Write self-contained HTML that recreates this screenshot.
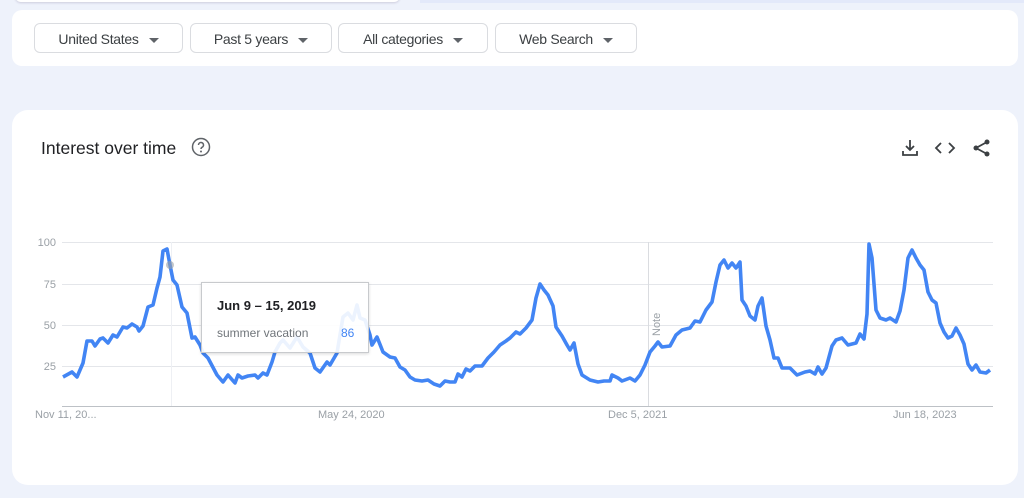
<!DOCTYPE html><html><head><style>
body{margin:0;width:1024px;height:498px;background:#eef2fb;font-family:"Liberation Sans",sans-serif;position:relative;overflow:hidden}
.bar{position:absolute;left:15px;top:-10px;width:385px;height:12px;background:#fff;border-radius:8px;box-shadow:0 1px 2px #ccd}
.blu{position:absolute;left:420px;top:0;width:604px;height:3px;background:#e3e9fa}
.top{position:absolute;left:12px;top:10px;width:1006px;height:56px;background:#fff;border-radius:10px}
.btn{position:absolute;top:13px;height:30px;border:1px solid #dadce0;border-radius:6px;font-size:14px;color:#3c4043;line-height:30px;text-align:center;box-sizing:border-box;letter-spacing:-0.3px}
.btn span{display:inline-block;width:0;height:0;border-left:5px solid transparent;border-right:5px solid transparent;border-top:5px solid #5f6368;margin-left:10px;vertical-align:middle}
.card{position:absolute;left:12px;top:110px;width:1006px;height:375px;background:#fff;border-radius:16px}
</style></head><body>
<div class="bar"></div><div class="blu"></div>
<div class="top">
<div class="btn" style="left:22px;width:149px">United States<span></span></div>
<div class="btn" style="left:178px;width:142px">Past 5 years<span></span></div>
<div class="btn" style="left:326px;width:150px">All categories<span></span></div>
<div class="btn" style="left:483px;width:142px">Web Search<span></span></div>
</div>
<div class="card"></div>
<div style="position:absolute;left:41px;top:138px;font-size:17.5px;color:#202124">Interest over time</div>
<svg style="position:absolute;left:191px;top:137px" width="20" height="20" viewBox="0 0 20 20"><circle cx="10" cy="10" r="8.5" fill="none" stroke="#5f6368" stroke-width="1.5"/><path d="M7.5 8a2.5 2.5 0 1 1 3.5 2.3c-.7.4-1 .8-1 1.7" fill="none" stroke="#5f6368" stroke-width="1.5"/><circle cx="10" cy="14.5" r="1" fill="#5f6368"/></svg>
<svg style="position:absolute;left:900px;top:138px" width="95" height="20" viewBox="0 0 95 20"><g fill="none" stroke="#3c4043" stroke-width="1.8"><path d="M10 2v10M6 8l4 4 4-4M3 13v4h14v-4"/><path d="M41 5l-5 5 5 5M49 5l5 5-5 5"/><path d="M87 4l-11 6 11 6"/></g><g fill="#3c4043"><circle cx="87" cy="4" r="2.5"/><circle cx="76" cy="10" r="2.5"/><circle cx="87" cy="16" r="2.5"/></g></svg>
<svg style="position:absolute;left:0;top:0" width="1024" height="498">
<g stroke="#e4e6ea" stroke-width="1"><line x1="62" y1="242.5" x2="993" y2="242.5"/><line x1="62" y1="284.5" x2="993" y2="284.5"/><line x1="62" y1="325.5" x2="993" y2="325.5"/><line x1="62" y1="366.5" x2="993" y2="366.5"/><line x1="171.5" y1="242" x2="171.5" y2="406" stroke="#eef0f4"/><line x1="648.5" y1="242" x2="648.5" y2="406" stroke="#dadce0"/></g>
<line x1="62" y1="406.5" x2="993" y2="406.5" stroke="#bdc1c6"/>
<g font-family="Liberation Sans" font-size="11" fill="#9aa0a6"><text x="56" y="246" text-anchor="end">100</text><text x="56" y="288" text-anchor="end">75</text><text x="56" y="329" text-anchor="end">50</text><text x="56" y="370" text-anchor="end">25</text>
<text x="35" y="418">Nov 11, 20...</text><text x="318" y="418">May 24, 2020</text><text x="608" y="418">Dec 5, 2021</text><text x="893" y="418">Jun 18, 2023</text>
<text transform="translate(660,336) rotate(-90)">Note</text></g>
<polyline fill="none" stroke="#4285f4" stroke-width="3.6" stroke-linejoin="round" points="63,377 72,372 77,377 83,363 87,341 92,341 95,346 100,339 103,338 108,343 113,335 117,337 123,327 127,328 132,324 137,327 139,331 143,326 148,307 153,305 157,288 160,277 163,251 167,249 170,265 173,280 177,285 182,307 187,313 192,338 195,337 200,345 203,353 208,358 217,375 223,382 228,375 235,383 238,375 242,378 248,376 255,375 258,378 263,373 267,375 272,362 275,352 280,343 283,340 290,348 297,337 303,347 310,353 315,368 320,372 327,362 330,365 337,353 343,317 348,313 353,320 357,305 360,318 365,320 370,335 372,345 377,337 383,352 390,357 395,358 400,367 405,370 410,377 415,380 422,381 428,380 434,384 440,386 445,381 450,382 455,382 458,374 462,377 466,369 470,371 475,366 482,366 488,358 494,352 500,345 506,341 510,338 516,332 520,334 526,328 532,320 536,298 540,284 544,290 548,295 553,306 556,327 562,336 567,345 570,350 574,343 578,364 582,375 590,380 598,382 604,381 610,381 612,375 618,378 622,381 630,378 635,381 640,375 645,365 650,352 655,346 658,342 662,347 670,346 676,335 682,330 690,328 695,321 700,322 706,310 712,302 716,282 720,265 724,260 728,268 732,263 736,268 740,262 742,300 746,306 750,316 755,320 758,306 762,298 766,326 770,340 774,358 778,358 782,368 790,368 797,375 805,372 810,371 815,374 818,367 822,374 826,368 832,346 836,340 842,338 848,345 856,343 860,334 864,339 867,314 869,244 872,258 876,310 880,318 886,320 890,318 896,322 900,311 904,290 908,258 912,250 916,258 920,265 924,270 928,292 932,300 936,303 940,323 944,332 948,338 952,336 956,328 960,335 964,344 968,364 972,370 976,365 980,372 986,373 990,370"/>
<circle cx="170" cy="265" r="4" fill="#9aa0a6" opacity=".6"/>
</svg>
<div style="position:absolute;left:201px;top:282px;width:168px;height:71px;background:rgba(255,255,255,.9);border:1px solid #c8cacd;box-shadow:0 1px 3px rgba(0,0,0,.15);box-sizing:border-box">
<div style="position:absolute;left:15px;top:15px;font-size:13px;font-weight:bold;color:#202124">Jun 9 – 15, 2019</div>
<div style="position:absolute;left:15px;top:43px;font-size:12px;color:#70757a">summer vacation</div>
<div style="position:absolute;left:139px;top:43px;font-size:12px;color:#4285f4">86</div>
</div>
</body></html>
